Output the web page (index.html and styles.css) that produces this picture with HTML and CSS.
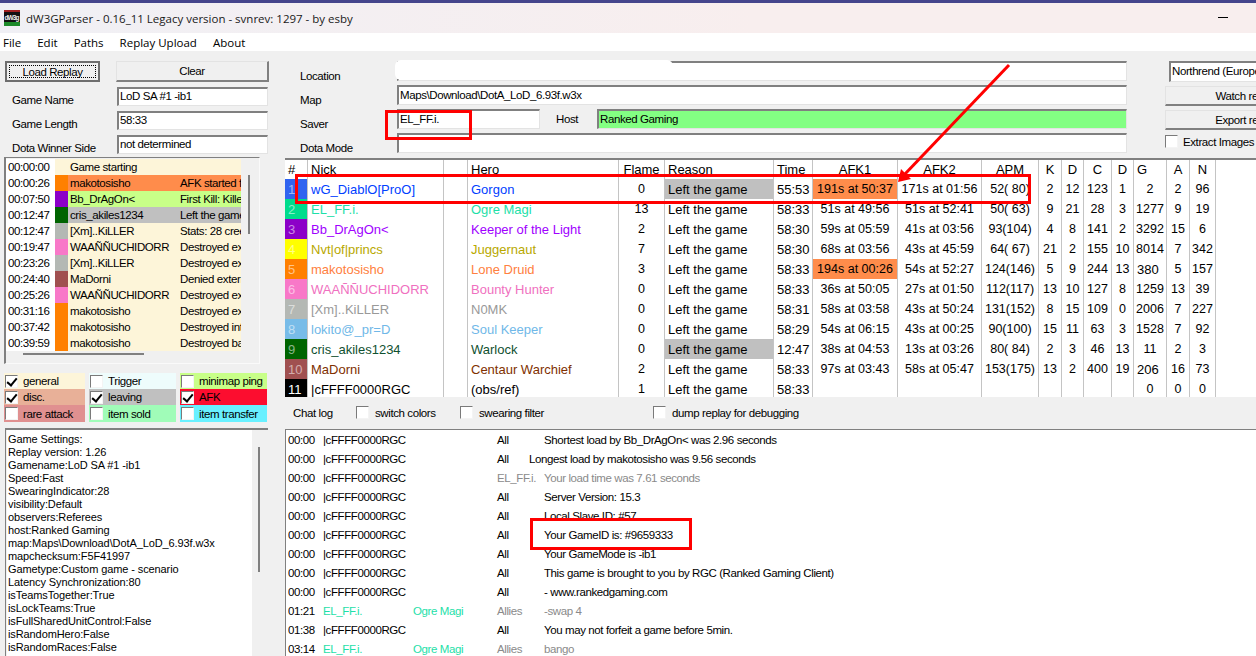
FILE: index.html
```html
<!DOCTYPE html>
<html lang="en">
<head>
  <meta charset="UTF-8">
  <title>dW3GParser</title>
  <link rel="stylesheet" href="styles.css">
</head>
<body>
  <div class="titlebar">
    <svg class="app-icon" width="16" height="16" viewBox="0 0 16 16">
      <rect width="16" height="16" fill="#111"/>
      <rect y="12" width="16" height="4" fill="#1c8a2a"/>
      <rect width="16" height="2" fill="#a02020"/>
      <text x="0.5" y="10" font-size="6.5" font-weight="700" fill="#eee" font-family="Liberation Sans" textLength="15">dW3g</text>
    </svg>
    <span class="title-text">dW3GParser - 0.16_11 Legacy version - svnrev: 1297 - by esby</span>
    <span class="minimize"></span>
  </div>
  <nav class="menu">
    <a>File</a><a>Edit</a><a>Paths</a><a>Replay Upload</a><a>About</a>
  </nav>

  <div class="main">
    <!-- left column -->
    <div class="left">
      <div class="btn-row">
        <button class="btn btn-default"><span>Load Replay</span></button>
        <button class="btn btn-clear">Clear</button>
      </div>
      <div class="field-row"><label>Game Name</label><div class="input">LoD SA #1 -ib1</div></div>
      <div class="field-row"><label>Game Length</label><div class="input">58:33</div></div>
      <div class="field-row"><label>Dota Winner Side</label><div class="input">not determined</div></div>

      <div class="events">
        <div class="events-list">
          <div class="ev"><span class="ev-t">00:00:00</span><span class="ev-c"></span><span class="ev-n">Game starting</span><span class="ev-m"></span></div>
          <div class="ev"><span class="ev-t">00:00:26</span><span class="ev-c c5"></span><span class="ev-n hl-afk">makotosisho</span><span class="ev-m hl-afk">AFK started for</span></div>
          <div class="ev"><span class="ev-t">00:07:50</span><span class="ev-c c3"></span><span class="ev-n hl-kill">Bb_DrAgOn&lt;</span><span class="ev-m hl-kill">First Kill: Killed</span></div>
          <div class="ev"><span class="ev-t">00:12:47</span><span class="ev-c c9"></span><span class="ev-n hl-left">cris_akiles1234</span><span class="ev-m hl-left">Left the game</span></div>
          <div class="ev"><span class="ev-t">00:12:47</span><span class="ev-c c7"></span><span class="ev-n">[Xm]..KiLLER</span><span class="ev-m">Stats: 28 creeps</span></div>
          <div class="ev"><span class="ev-t">00:19:47</span><span class="ev-c c6"></span><span class="ev-n">WAAÑÑUCHIDORR</span><span class="ev-m">Destroyed exter</span></div>
          <div class="ev"><span class="ev-t">00:23:26</span><span class="ev-c c7"></span><span class="ev-n">[Xm]..KiLLER</span><span class="ev-m">Destroyed exter</span></div>
          <div class="ev"><span class="ev-t">00:24:40</span><span class="ev-c c10"></span><span class="ev-n">MaDorni</span><span class="ev-m">Denied external</span></div>
          <div class="ev"><span class="ev-t">00:25:26</span><span class="ev-c c6"></span><span class="ev-n">WAAÑÑUCHIDORR</span><span class="ev-m">Destroyed exter</span></div>
          <div class="ev"><span class="ev-t">00:31:16</span><span class="ev-c c5"></span><span class="ev-n">makotosisho</span><span class="ev-m">Destroyed exter</span></div>
          <div class="ev"><span class="ev-t">00:37:42</span><span class="ev-c c5"></span><span class="ev-n">makotosisho</span><span class="ev-m">Destroyed inter</span></div>
          <div class="ev"><span class="ev-t">00:39:59</span><span class="ev-c c5"></span><span class="ev-n">makotosisho</span><span class="ev-m">Destroyed barra</span></div>
        </div>
        <div class="vscroll events-v"></div>
        <div class="hscroll"></div>
      </div>

      <div class="filters">
        <label class="filter f-general"><i class="cb on"></i>general</label>
        <label class="filter f-trigger"><i class="cb"></i>Trigger</label>
        <label class="filter f-ping"><i class="cb"></i>minimap ping</label>
        <label class="filter f-disc"><i class="cb on"></i>disc.</label>
        <label class="filter f-leaving"><i class="cb on"></i>leaving</label>
        <label class="filter f-afk"><i class="cb on"></i>AFK</label>
        <label class="filter f-rare"><i class="cb"></i>rare attack</label>
        <label class="filter f-sold"><i class="cb"></i>item sold</label>
        <label class="filter f-transfer"><i class="cb"></i>item transfer</label>
      </div>

      <div class="settings">
        <div class="settings-text">Game Settings:<br>Replay version: 1.26<br>Gamename:LoD SA #1 -ib1<br>Speed:Fast<br>SwearingIndicator:28<br>visibility:Default<br>observers:Referees<br>host:Ranked Gaming<br>map:Maps\Download\DotA_LoD_6.93f.w3x<br>mapchecksum:F5F41997<br>Gametype:Custom game - scenario<br>Latency Synchronization:80<br>isTeamsTogether:True<br>isLockTeams:True<br>isFullSharedUnitControl:False<br>isRandomHero:False<br>isRandomRaces:False</div>
        <div class="vscroll settings-v"></div>
      </div>
    </div>

    <!-- right column -->
    <div class="right">
      <div class="top">
        <div class="info">
          <div class="info-row"><label>Location</label><div class="input grow"><span class="redact"></span></div></div>
          <div class="info-row"><label>Map</label><div class="input grow">Maps\Download\DotA_LoD_6.93f.w3x</div></div>
          <div class="info-row"><label>Saver</label><div class="input saver">EL_FF.i.</div><span class="host-label">Host</span><div class="input grow host">Ranked Gaming</div></div>
          <div class="info-row"><label>Dota Mode</label><div class="input grow"></div></div>
        </div>
        <div class="side">
          <div class="input side-select">Northrend (Europe)</div>
          <button class="btn side-btn">Watch replay</button>
          <button class="btn side-btn">Export replay</button>
          <label class="side-check"><i class="cb"></i>Extract Images</label>
        </div>
      </div>

      <div class="players-wrap">
      <table class="players">
        <colgroup>
          <col class="w23"><col class="w136"><col class="w24"><col class="w151"><col class="w46"><col class="w109"><col class="w39"><col class="w85"><col class="w84"><col class="w57"><col class="w23"><col class="w22"><col class="w28"><col class="w22"><col class="w33"><col class="w23"><col class="w26">
        </colgroup>
        <thead>
          <tr><th class="l">#</th><th class="l">Nick</th><th></th><th class="l">Hero</th><th>Flame</th><th class="l">Reason</th><th class="l">Time</th><th>AFK1</th><th>AFK2</th><th>APM</th><th>K</th><th>D</th><th>C</th><th>D</th><th class="l">G</th><th>A</th><th>N</th></tr>
        </thead>
        <tbody>
          <tr class="p1"><td class="num c1">1</td><td class="l who">wG_DiablO[ProO]</td><td></td><td class="l who">Gorgon</td><td>0</td><td class="l hl-left">Left the game</td><td class="l">55:53</td><td class="hl-afk">191s at 50:37</td><td>171s at 01:56</td><td>52( 80)</td><td>2</td><td>12</td><td>123</td><td>1</td><td>2</td><td>2</td><td>96</td></tr>
          <tr class="p2"><td class="num c2">2</td><td class="l who">EL_FF.i.</td><td></td><td class="l who">Ogre Magi</td><td>13</td><td class="l">Left the game</td><td class="l">58:33</td><td>51s at 49:56</td><td>51s at 52:41</td><td>50( 63)</td><td>9</td><td>21</td><td>28</td><td>3</td><td>1277</td><td>9</td><td>19</td></tr>
          <tr class="p3"><td class="num c3">3</td><td class="l who">Bb_DrAgOn&lt;</td><td></td><td class="l who">Keeper of the Light</td><td>2</td><td class="l">Left the game</td><td class="l">58:30</td><td>59s at 05:59</td><td>41s at 03:56</td><td>93(104)</td><td>4</td><td>8</td><td>141</td><td>2</td><td>3292</td><td>15</td><td>6</td></tr>
          <tr class="p4"><td class="num c4">4</td><td class="l who">Nvt|of|princs</td><td></td><td class="l who">Juggernaut</td><td>7</td><td class="l">Left the game</td><td class="l">58:30</td><td>68s at 03:56</td><td>43s at 45:59</td><td>64( 67)</td><td>21</td><td>2</td><td>155</td><td>10</td><td>8014</td><td>7</td><td>342</td></tr>
          <tr class="p5"><td class="num c5">5</td><td class="l who">makotosisho</td><td></td><td class="l who">Lone Druid</td><td>3</td><td class="l">Left the game</td><td class="l">58:33</td><td class="hl-afk">194s at 00:26</td><td>54s at 52:27</td><td>124(146)</td><td>5</td><td>9</td><td>244</td><td>13</td><td class="l">380</td><td>5</td><td>157</td></tr>
          <tr class="p6"><td class="num c6">6</td><td class="l who">WAAÑÑUCHIDORR</td><td></td><td class="l who">Bounty Hunter</td><td>0</td><td class="l">Left the game</td><td class="l">58:33</td><td>36s at 50:05</td><td>27s at 01:50</td><td>112(117)</td><td>13</td><td>10</td><td>127</td><td>8</td><td>1259</td><td>13</td><td>39</td></tr>
          <tr class="p7"><td class="num c7">7</td><td class="l who">[Xm]..KiLLER</td><td></td><td class="l who">N0MK</td><td>0</td><td class="l">Left the game</td><td class="l">58:31</td><td>58s at 03:58</td><td>43s at 50:24</td><td>131(152)</td><td>8</td><td>15</td><td>109</td><td>0</td><td>2006</td><td>7</td><td>227</td></tr>
          <tr class="p8"><td class="num c8">8</td><td class="l who">lokito@_pr=D</td><td></td><td class="l who">Soul Keeper</td><td>0</td><td class="l">Left the game</td><td class="l">58:29</td><td>54s at 06:15</td><td>43s at 00:25</td><td>90(100)</td><td>15</td><td>11</td><td>63</td><td>3</td><td>1528</td><td>7</td><td>92</td></tr>
          <tr class="p9"><td class="num c9">9</td><td class="l who">cris_akiles1234</td><td></td><td class="l who">Warlock</td><td>0</td><td class="l hl-left">Left the game</td><td class="l">12:47</td><td>38s at 04:53</td><td>13s at 03:26</td><td>80( 84)</td><td>2</td><td>3</td><td>46</td><td>13</td><td>11</td><td>2</td><td>3</td></tr>
          <tr class="p10"><td class="num c10">10</td><td class="l who">MaDorni</td><td></td><td class="l who">Centaur Warchief</td><td>2</td><td class="l">Left the game</td><td class="l">58:33</td><td>97s at 03:43</td><td>58s at 05:47</td><td>153(175)</td><td>13</td><td>2</td><td>400</td><td>19</td><td class="l">206</td><td>16</td><td>73</td></tr>
          <tr class="p11"><td class="num c11">11</td><td class="l who">|cFFFF0000RGC</td><td></td><td class="l who">(obs/ref)</td><td>1</td><td class="l">Left the game</td><td class="l">58:33</td><td></td><td></td><td></td><td></td><td></td><td></td><td></td><td>0</td><td>0</td><td>0</td></tr>
        </tbody>
      </table>
      </div>

      <div class="chat-bar">
        <span class="chat-title">Chat log</span>
        <label class="opt opt-switch"><i class="cb"></i>switch colors</label>
        <label class="opt opt-swear"><i class="cb"></i>swearing filter</label>
        <label class="opt"><i class="cb"></i>dump replay for debugging</label>
      </div>

      <div class="chat">
        <div class="line"><span>00:00</span><span>|cFFFF0000RGC</span><span></span><span>All</span><span>Shortest load by Bb_DrAgOn&lt; was 2.96 seconds</span></div>
        <div class="line"><span>00:00</span><span>|cFFFF0000RGC</span><span></span><span>All</span><span class="out">Longest load by makotosisho was 9.56 seconds</span></div>
        <div class="line"><span>00:00</span><span>|cFFFF0000RGC</span><span></span><span class="dim">EL_FF.i.</span><span class="dim">Your load time was 7.61 seconds</span></div>
        <div class="line"><span>00:00</span><span>|cFFFF0000RGC</span><span></span><span>All</span><span>Server Version: 15.3</span></div>
        <div class="line"><span>00:00</span><span>|cFFFF0000RGC</span><span></span><span>All</span><span>Local Slave ID: #57</span></div>
        <div class="line"><span>00:00</span><span>|cFFFF0000RGC</span><span></span><span>All</span><span>Your GameID is: #9659333</span></div>
        <div class="line"><span>00:00</span><span>|cFFFF0000RGC</span><span></span><span>All</span><span>Your GameMode is -ib1</span></div>
        <div class="line"><span>00:00</span><span>|cFFFF0000RGC</span><span></span><span>All</span><span>This game is brought to you by RGC (Ranked Gaming Client)</span></div>
        <div class="line"><span>00:00</span><span>|cFFFF0000RGC</span><span></span><span>All</span><span>- www.rankedgaming.com</span></div>
        <div class="line"><span>01:21</span><span class="teal">EL_FF.i.</span><span class="teal">Ogre Magi</span><span class="dim">Allies</span><span class="dim">-swap 4</span></div>
        <div class="line"><span>01:38</span><span>|cFFFF0000RGC</span><span></span><span>All</span><span>You may not forfeit a game before 5min.</span></div>
        <div class="line"><span>03:14</span><span class="teal">EL_FF.i.</span><span class="teal">Ogre Magi</span><span class="dim">Allies</span><span class="dim">bango</span></div>
      </div>
    </div>
  </div>

  <!-- red annotations drawn on top of the screenshot -->
  <div class="mark mark-saver"></div>
  <div class="mark mark-row"></div>
  <div class="mark mark-id"></div>
  <svg class="arrow" width="1256" height="656" viewBox="0 0 1256 656">
    <line x1="1009" y1="65" x2="905" y2="174" stroke="#f00" stroke-width="3"/>
    <polygon points="898,182 901,169 911,179" fill="#f00"/>
  </svg>
</body>
</html>
```

FILE: styles.css
```css
:root {
  --face: #f0f0f0;
  --edge-dark: #808080;
  --edge-light: #e3e3e3;
  --cream: #fdf5d9;
  --grid-line: #c4c4c4;
  --afk: #ff8c4b;
  --left: #c0c0c0;
}
* { margin:0; padding:0; box-sizing:border-box; }
html, body { height:100%; overflow:hidden; }
body {
  position:relative;
  font-family:"Liberation Sans", Arial, sans-serif;
  font-size:11.5px;
  letter-spacing:-0.4px;
  color:#000;
  background:var(--face);
  border-top:3px solid #45458c;
}

/* title + menu */
.titlebar {
  display:flex; align-items:center;
  height:30px; padding-left:4px;
  letter-spacing:0;
  background:linear-gradient(to right, #f0f0f5, #f8eeee 60%);
}
.app-icon { margin-right:6px; }
.title-text { font-family:"Open Sans", sans-serif; font-size:11.5px; color:#1a1a1a; }
.minimize { margin:0 28px 2px auto; width:10px; height:1px; background:#000; }
.menu { display:flex; align-items:center; height:18px; padding-left:3px; background:#fff; letter-spacing:0; }
.menu a { margin-right:16px; font-family:"Open Sans", sans-serif; font-size:11.5px; }

.main { display:grid; grid-template-columns:285px 1fr; height:605px; }

/* shared widgets */
.input {
  height:20px; padding:1px 0 0 1px;
  line-height:15px; white-space:nowrap; overflow:hidden;
  background:#fff;
  border-top:2px solid var(--edge-dark);
  border-left:2px solid var(--edge-dark);
  border-right:1px solid var(--edge-light);
  border-bottom:1px solid var(--edge-light);
}
.btn {
  font:inherit; letter-spacing:inherit; background:var(--face);
  border-top:1px solid var(--edge-light);
  border-left:1px solid var(--edge-light);
  border-right:2px solid var(--edge-dark);
  border-bottom:2px solid var(--edge-dark);
}
.cb {
  display:block; flex:none; position:relative;
  width:13px; height:13px; background:#fff;
  border-top:1px solid #7a7a7a; border-left:1px solid #7a7a7a;
  border-right:1px solid #f4f4f4; border-bottom:1px solid #f4f4f4;
}
.cb.on::after {
  content:""; position:absolute; left:3px; top:0;
  width:4px; height:8px;
  border:solid #000; border-width:0 2px 2px 0;
  transform:rotate(40deg);
}
.vscroll { position:absolute; width:2px; background:var(--edge-dark); }

/* left column */
.left { padding:10px 0 0 5px; }
.btn-row { display:flex; gap:16px; height:21px; margin-bottom:4px; }
.btn-default { width:95px; padding:2px; border:2px solid #6e6e6e; }
.btn-default span { display:block; height:100%; line-height:12px; border:1px dotted #000; }
.btn-clear { width:153px; }
.field-row { display:flex; align-items:center; height:20px; margin-bottom:4px; }
.field-row label { width:112px; padding:7px 0 0 7px; white-space:nowrap; }
.field-row .input { width:151px; height:19px; padding-top:0; }

.events {
  position:relative;
  width:256px; height:207px; margin:-1px 0 9px -1px; padding:1px 18px 18px 0;
  border-top:1px solid var(--edge-dark); border-left:2px solid var(--edge-dark);
  border-right:1px solid #fafafa; border-bottom:1px solid #fafafa;
  overflow:hidden;
}
.ev { display:grid; grid-template-columns:49px 13px 110px 64px; height:16px; line-height:16px; white-space:nowrap; overflow:hidden; background:#fff; }
.ev-t { padding-left:2px; }
.ev-n, .ev-m { background:var(--cream); overflow:hidden; padding-left:2px; }
.ev-n.hl-afk, .ev-m.hl-afk { background:var(--afk); }
.ev-n.hl-kill, .ev-m.hl-kill { background:#c8ff88; }
.ev-n.hl-left, .ev-m.hl-left { background:var(--left); }
.ev-c { background:var(--cream); }
.events-v { right:9px; top:17px; height:59px; }
.hscroll { position:absolute; left:17px; bottom:8px; width:121px; height:2px; background:var(--edge-dark); }

.filters { display:grid; grid-template-columns:81px 87px 87px; column-gap:4px; margin-left:-1px; width:263px; }
.filter { display:flex; align-items:center; gap:5px; height:16px; white-space:nowrap; }
.filter:nth-child(n+7) { height:17px; }
.filter .cb { margin-left:1px; }
.f-general { background:var(--cream); }
.f-trigger { background:#eefcfc; }
.f-ping { background:#c8ff88; }
.f-disc { background:#e8b098; }
.f-leaving { background:var(--left); }
.f-afk { background:#fc0d2f; }
.f-rare { background:#e09090; }
.f-sold { background:#a0fcb8; }
.f-transfer { background:#68f0ff; }

.settings {
  position:relative;
  width:263px; height:240px; margin-top:6px; padding:0 0 0 1px;
  border-top:2px solid var(--edge-dark); border-left:1px solid var(--edge-dark);
  overflow:hidden;
}
.settings-text {
  width:245px; height:100%; padding:3px 0 0 1px;
  background:#fff; font-size:11px; letter-spacing:-0.1px; line-height:13px; white-space:nowrap;
}
.settings-v { right:8px; top:17px; height:125px; }

/* right column */
.top { display:flex; height:107px; padding-top:10px; }
.info { width:842px; padding-left:15px; }
.info-row { display:flex; align-items:center; height:20px; margin-bottom:4px; }
.info-row label { width:97px; padding-top:10px; }
.grow { flex:1; position:relative; overflow:visible; }
.saver { width:143px; }
.host-label { width:57px; padding-left:16px; }
.host { background:#83ff83; }
.redact { position:absolute; left:-4px; top:-3px; width:278px; height:20px; border-radius:6px; background:#fff; }
.side { margin-left:38px; flex:none; width:91px; overflow:hidden; white-space:nowrap; }
.side-select { width:100%; height:21px; margin-left:4px; }
.side-btn { display:block; width:164px; height:20px; margin-top:4px; text-align:center; }
.side-check { display:flex; align-items:center; gap:5px; margin-top:5px; }

/* players table */
.players-wrap { height:239px; background:#fff; border-top:2px solid var(--edge-dark); overflow:hidden; }
.players {
  table-layout:fixed; width:931px;
  border-collapse:separate; border-spacing:0;
  font-size:12.5px; letter-spacing:0;
}
.w22 { width:22px; } .w23 { width:23px; } .w24 { width:24px; } .w26 { width:26px; }
.w28 { width:28px; } .w33 { width:33px; } .w39 { width:39px; } .w46 { width:46px; }
.w57 { width:57px; } .w84 { width:84px; } .w85 { width:85px; } .w109 { width:109px; }
.w136 { width:136px; } .w151 { width:151px; }
.players th { height:19px; font-weight:normal; font-size:13px; overflow:hidden; }
.players td { height:20px; overflow:hidden; }
.players th, .players td {
  padding:0; text-align:center; white-space:pre;
  border-right:1px solid var(--grid-line);
}
.players .l { text-align:left; padding-left:3px; font-size:13px; }
.players .num { text-align:left; padding-left:3px; color:rgba(255,255,255,.55); font-size:13px; }
.players .hl-left { background:var(--left); }
.players .hl-afk { background:var(--afk); }

.c1 { background:#3064f0; }
.c2 { background:#00dc8c; }
.c3 { background:#8c00c8; }
.c4 { background:#ffff00; }
.c5 { background:#ff8000; }
.c6 { background:#f878c8; }
.c7 { background:#b4b8b4; }
.c8 { background:#78bce8; }
.c9 { background:#006400; }
.c10 { background:#a05050; }
.c11 { background:#000; }
.players .c11 { color:#fff; }
.p1 .who { color:#0040ff; }
.p2 .who { color:#1ee0a8; }
.p3 .who { color:#a000ff; }
.p4 .who { color:#b8a800; }
.p5 .who { color:#ff8040; }
.p6 .who { color:#f070c0; }
.p7 .who { color:#999; }
.p8 .who { color:#70b8e8; }
.p9 .who { color:#105030; }
.p10 .who { color:#803000; }

/* chat log */
.chat-bar { display:flex; align-items:center; height:32px; padding:0 0 1px 8px; }
.chat-title { width:63px; }
.opt { display:flex; align-items:center; gap:6px; white-space:nowrap; }
.opt-switch { width:104px; }
.opt-swear { width:193px; }
.chat { height:228px; padding-top:1px; overflow:hidden; background:#fff; border-top:1px solid var(--edge-dark); border-left:1px solid var(--edge-dark); }
.line { display:grid; grid-template-columns:35px 90px 84px 47px 1fr; height:19px; line-height:19px; padding-left:2px; white-space:nowrap; }
.out { margin-left:-15px; }
.dim { color:#8a8a8a; }
.teal { color:#1ee0a8; }

/* annotations */
.mark { position:absolute; border:3px solid #f00; }
.mark-saver { left:385px; top:107px; width:87px; height:30px; }
.mark-row { left:295px; top:171px; width:736px; height:30px; }
.mark-id { left:530px; top:515px; width:162px; height:32px; }
.arrow { position:absolute; left:0; top:-3px; pointer-events:none; }
```
